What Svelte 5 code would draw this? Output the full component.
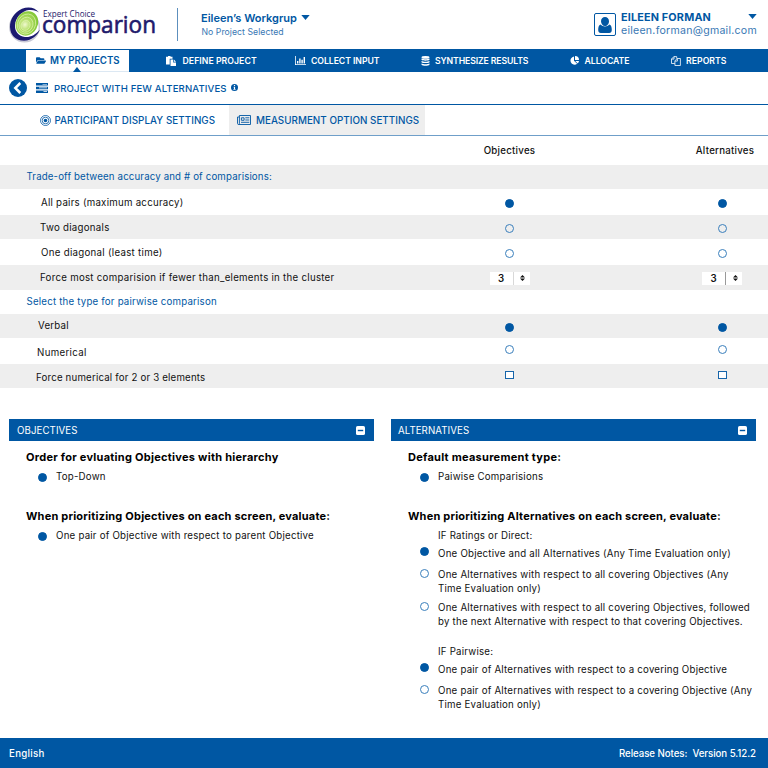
<script>
  const nav = [
    { icon: 'paste', label: 'DEFINE PROJECT', width: 129, gap: 16.5, track: 0.05 },
    { icon: 'chart', label: 'COLLECT INPUT', width: 126, gap: 16, track: -0.06 },
    { icon: 'stack', label: 'SYNTHESIZE RESULTS', width: 149, gap: 14, track: -0.12 },
    { icon: 'pie', label: 'ALLOCATE', width: 101, gap: 14.5, track: -0.04 },
    { icon: 'copy', label: 'REPORTS', width: 70, gap: 15, track: 0.04 }
  ];

  const rows = [
    { label: 'Trade-off between accuracy and # of comparisions:', x: 26.5, h: 24, grey: true, head: true, dy: -0.5, track: 0.14 },
    { label: 'All pairs (maximum accuracy)', x: 41, h: 26, dy: 0, track: 0.25, mark: 'on', my: 1 },
    { label: 'Two diagonals', x: 40, h: 24, grey: true, dy: 0, track: 0.27, mark: 'off', my: 1 },
    { label: 'One diagonal (least time)', x: 41, h: 26, dy: 0, track: 0.29, mark: 'off', my: 1 },
    { label: 'Force most comparision if fewer than_elements in the cluster', x: 40, h: 25, grey: true, dy: -0.5, track: 0.27, mark: 'spin', my: 0.5 },
    { label: 'Select the type for pairwise comparison', x: 26.5, h: 24, head: true, dy: -1, track: 0.2 },
    { label: 'Verbal', x: 38, h: 24, grey: true, dy: -0.5, track: 0.22, mark: 'on', my: 1 },
    { label: 'Numerical', x: 37, h: 26, dy: 1, track: 0.33, mark: 'off', my: -1.5 },
    { label: 'Force numerical for 2 or 3 elements', x: 36, h: 24, grey: true, dy: 1, track: 0.18, mark: 'box', my: -1 }
  ];
</script>

{#snippet mark(kind)}
  {#if kind === 'on'}
    <span class="dot on"></span>
  {:else if kind === 'off'}
    <span class="dot"></span>
  {:else if kind === 'box'}
    <span class="box"></span>
  {:else if kind === 'spin'}
    <span class="spin">
      <span class="num">3</span>
      <span class="arrows">
        <svg width="5" height="6" viewBox="0 0 5 6"><path d="M2.5 0 5 2.6H0zM0 3.4h5L2.5 6z" /></svg>
      </span>
    </span>
  {/if}
{/snippet}

{#snippet option(on, lines, gap, dotTop = 3)}
  <div class="option" style:margin-top="{gap}px">
    <span class="dot {on ? 'on' : ''}" style:margin-top="{dotTop}px"></span>
    <div class="lines">
      {#each lines as line}<div>{line}</div>{/each}
    </div>
  </div>
{/snippet}

{#snippet panelHead(title)}
  <div class="panel-head">
    <span>{title}</span>
    <svg width="9" height="9" viewBox="0 0 9 9"><rect width="9" height="9" rx="1.6" fill="#fff" /><rect x="1.8" y="3.8" width="5.4" height="1.4" fill="#0057a3" /></svg>
  </div>
{/snippet}

<div class="page">
  <header>
    <svg class="logo" width="150" height="40" viewBox="0 0 150 40">
      <defs>
        <radialGradient id="green" cx="0.45" cy="0.58" r="0.6">
          <stop offset="0" stop-color="#f1f9d0" />
          <stop offset="0.4" stop-color="#b5df6a" />
          <stop offset="1" stop-color="#7cc52f" />
        </radialGradient>
      </defs>
      <ellipse cx="15.500" cy="22" rx="14.800" ry="14.800" fill="none" stroke="#c9cad6" stroke-width="1.400" transform="translate(0 1)" />
      <path fill="#1c1a70" fill-rule="evenodd" d="M30 8.500C26.500 3.500 19.500 2 13 4.800 5.500 8 .8 15.500 1 23 1.200 31.500 7.500 37.200 15.500 36.800 23 36.300 28.500 31.500 31 25.500 26.500 31 21 33.600 16 33 9.500 32.200 5.500 27.300 6 21 6.600 13.500 12.500 7 20 6 24.500 5.600 27.500 6.600 30 8.500Z" />
      <ellipse cx="17.900" cy="19.400" rx="10.900" ry="12.600" fill="url(#green)" transform="rotate(30 17.9 19.4)" />
      <g fill="none" stroke="#def2ae" stroke-width="0.7">
        <ellipse cx="17.500" cy="20" rx="8.900" ry="10.300" transform="rotate(30 17.5 20)" />
        <ellipse cx="17" cy="20.700" rx="6.700" ry="7.700" transform="rotate(30 17 20.7)" />
        <ellipse cx="16.500" cy="21.400" rx="4.300" ry="5.100" transform="rotate(30 16.5 21.4)" />
      </g>
      <text x="34" y="13" class="logo-small" textLength="52" lengthAdjust="spacingAndGlyphs">Expert Choice</text>
      <text x="33" y="28.600" class="logo-big" textLength="114" lengthAdjust="spacingAndGlyphs">comparion</text>
    </svg>
    <div class="rule"></div>
    <div class="workgroup">
      <div class="wg-name">Eileen’s Workgrup <svg width="9" height="5" viewBox="0 0 9 5"><path d="M.3 0h8.400L4.500 5z" /></svg></div>
      <div class="wg-sub">No Project Selected</div>
    </div>
    <div class="avatar">
      <svg width="14" height="16" viewBox="0 0 14 16"><path d="M7 0C9.400 0 11 1.700 11 4.200 11 6.800 9.300 9 7 9S3 6.800 3 4.200C3 1.700 4.600 0 7 0ZM2.900 7.500C3.900 9.100 5.300 9.400 7 9.400S10.100 9.100 11.100 7.500C13.200 7.800 13.800 10 13.800 13 13.800 15 12.800 15.900 11.200 15.900H2.800C1.200 15.900.2 15 .2 13 .2 10 .8 7.800 2.900 7.500Z" /></svg>
    </div>
    <div class="user">
      <div class="user-top"><span>EILEEN FORMAN</span><svg width="9" height="5" viewBox="0 0 9 5"><path d="M.3 0h8.400L4.500 5z" /></svg></div>
      <div class="email">eileen.forman@gmail.com</div>
    </div>
  </header>

  <nav>
    <div class="active">
      <svg width="10" height="9" viewBox="0 32 576 448"><path d="M572.694 292.093L500.27 416.248A63.997 63.997 0 0 1 444.989 448H45.025c-18.523 0-30.064-20.093-20.731-36.093l72.424-124.155A64 64 0 0 1 152 256h399.964c18.523 0 30.064 20.093 20.73 36.093zM152 224h328v-48c0-26.510-21.490-48-48-48H272l-64-64H48C21.490 64 0 85.490 0 112v278.046l69.077-118.418C86.214 242.250 117.989 224 152 224z" /></svg>
      <span>MY PROJECTS</span>
      <i class="pointer"></i>
    </div>
    {#each nav as item}
      <div class="nav-item" style:width="{item.width}px">
        <span class="nav-icon" style:width="{item.gap}px">
          {#if item.icon === 'paste'}
            <svg width="10" height="10" viewBox="0 0 10 10"><path fill="#fff" d="M0 .8h2V0h2.500v.8h2v1.900H3.700V8.600H0z" /><path fill="#fff" d="M4.500 3.500h2.700v2.900H10V10H4.500zM7.900 3.500 10 5.700H7.900z" /></svg>
          {:else if item.icon === 'chart'}
            <svg width="11" height="9" viewBox="0 0 11 9"><path fill="#fff" d="M0 0h.8v8.200H11V9H0zM2 5h1.400v2.600H2zM4.200 2.600h1.400v5H4.200zM6.400 3.800h1.400v3.800H6.400zM8.600 1H10v6.600H8.600z" /></svg>
          {:else if item.icon === 'stack'}
            <svg width="9" height="10" viewBox="0 0 9 10"><g fill="#fff"><ellipse cx="4.500" cy="1.400" rx="4" ry="1.300" /><path d="M.5 2.600c2 1 6 1 8 0v1.200c-1.500 1.200-6.500 1.200-8 0zM.5 5c2 1 6 1 8 0v1.200c-1.500 1.200-6.500 1.200-8 0zM.5 7.400c2 1 6 1 8 0v1.300c-1.500 1.500-6.500 1.500-8 0z" /></g></svg>
          {:else if item.icon === 'pie'}
            <svg width="9" height="9" viewBox="0 0 9 9"><path fill="#fff" d="M4 .5v4.300l3.100 3A4.100 4.100 0 1 1 4 .5ZM5 0A4.100 4.100 0 0 1 9 4.100H5ZM5.300 4.900H9A4.100 4.100 0 0 1 7.800 7.400z" /></svg>
          {:else}
            <svg width="10" height="10" viewBox="0 0 10 10"><g fill="none" stroke="#fff" stroke-width=".8"><path d="M3.800 7.500H.5V3L2.900.6h2.800v2M3 .6v2.500H.5M3.900 4.900 6.200 2.500h3.200v7H3.900zM6.400 2.600v2.500H4" /></g></svg>
          {/if}
        </span>
        <span style:letter-spacing="{item.track}px">{item.label}</span>
      </div>
    {/each}
  </nav>

  <div class="crumb">
    <svg width="18" height="18" viewBox="0 0 18 18"><circle cx="9" cy="9" r="9" fill="#0057a3" /><path d="M11.300 4 6.300 9l5 5" fill="none" stroke="#fff" stroke-width="2.500" /></svg>
    <svg class="server" width="12" height="10" viewBox="0 0 12 10"><path d="M0 0h12v2.500H0zM0 3.700h12v2.500H0zM0 7.400h12v2.500H0z" /><path fill="#fff" d="M6.500.9H11v.7H6.500zM3 4.600h8v.7H3zM7.500 8.300H11V9H7.500z" /></svg>
    <span>PROJECT WITH FEW ALTERNATIVES</span>
    <svg class="info" width="7" height="7" viewBox="0 0 7 7"><circle cx="3.500" cy="3.500" r="3.500" /><path fill="#fff" d="M2.900 1h1.200v1H2.900zM2.600 2.700h1.500v2.200h.5v.8H2.400v-.8h.5V3.400h-.3z" /></svg>
  </div>

  <div class="tabs">
    <div class="tab first">
      <svg width="11" height="11" viewBox="0 0 11 11"><g fill="none" stroke="#0057a3" stroke-width=".8"><circle cx="5.500" cy="5.500" r="5" /><circle cx="5.500" cy="5.500" r="3.300" /></g><circle cx="5.500" cy="5.500" r="1.800" /></svg>
      <span>PARTICIPANT DISPLAY SETTINGS</span>
    </div>
    <div class="tab second">
      <svg width="14" height="10" viewBox="0 0 14 10"><path fill="none" stroke="#0057a3" stroke-width=".9" d="M2.400.5h11.100v9H1.600C.9 9.500.5 9.100.5 8.400V2h1.900M2.400.5v7.900c0 .6-.3 1-.8 1" /><path fill="none" stroke="#0057a3" stroke-width=".9" d="M4.400 2.800h2.700v2.500H4.400zM8.300 2.800h4M8.300 5h4M4 7.300h8.300" /></svg>
      <span>MEASURMENT OPTION SETTINGS</span>
    </div>
  </div>

  <div class="grid heads">
    <span></span><span class="cell">Objectives</span><span class="cell last alt">Alternatives</span>
  </div>
  {#each rows as row}
    <div class="grid row" class:grey={row.grey} class:head={row.head} style:height="{row.h}px">
      <span style:padding-left="{row.x}px" style:margin-top="{row.dy * 2}px" style:letter-spacing="{row.track}px">{row.label}</span>
      {#if row.mark}
        <span class="cell" style:margin-top="{row.my * 2}px">{@render mark(row.mark)}</span>
        <span class="cell last" style:margin-top="{row.my * 2}px">{@render mark(row.mark)}</span>
      {/if}
    </div>
  {/each}

  <main>
    <section>
      {@render panelHead('OBJECTIVES')}
      <h3>Order for evluating Objectives with hierarchy</h3>
      {@render option(true, ['Top-Down'], 5)}
      <h3 class="next">When prioritizing Objectives on each screen, evaluate:</h3>
      {@render option(true, ['One pair of Objective with respect to parent Objective'], 5)}
    </section>
    <section class="right">
      {@render panelHead('ALTERNATIVES')}
      <h3>Default measurement type:</h3>
      {@render option(true, ['Paiwise Comparisions'], 5)}
      <h3 class="next">When prioritizing Alternatives on each screen, evaluate:</h3>
      <div class="cond">IF Ratings or Direct:</div>
      {@render option(true, ['One Objective and all Alternatives (Any Time Evaluation only)'], 4, 0)}
      {@render option(false, ['One Alternatives with respect to all covering Objectives (Any', 'Time Evaluation only)'], 6.500, 1.500)}
      {@render option(false, ['One Alternatives with respect to all covering Objectives, followed', 'by the next Alternative with respect to that covering Objectives.'], 5, 1)}
      <div class="cond second-cond">IF Pairwise:</div>
      {@render option(true, ['One pair of Alternatives with respect to a covering Objective'], 4, 0)}
      {@render option(false, ['One pair of Alternatives with respect to a covering Objective (Any', 'Time Evaluation only)'], 7, 1)}
    </section>
  </main>

  <footer><span class="lang">English</span><span class="release">Release Notes:&nbsp; Version 5.12.2</span></footer>
</div>

<style>
  .page {
    width: 768px;
    height: 768px;
    display: flex;
    flex-direction: column;
    overflow: hidden;
    background: #fff;
    color: #111;
    font-family: Inter, 'Open Sans', sans-serif;
    font-size: 9.7px;
    white-space: nowrap;
  }
  svg { display: block; flex: none; fill: #0057a3; }
  header { height: 49px; flex: none; display: flex; color: #0057a3; }
  .logo { margin: 4px 0 0 9px; overflow: visible; }
  .logo text { fill: #1f1a6b; font-family: 'Open Sans', 'Noto Sans', sans-serif; }
  .logo-small { font-size: 9.500px; }
  .logo-big { font-size: 23.500px; stroke: #1f1a6b; stroke-width: .6; }
  .rule { width: 1px; height: 33px; margin: 8px 0 0 18px; background: #5c8fbd; }
  .workgroup { width: 393px; margin: 10px 0 0 23px; }
  .wg-name { display: flex; align-items: center; gap: 4px; height: 15px; font-size: 11px; font-weight: 600; }
  .wg-sub { margin-top: 1px; height: 12px; line-height: 12px; font-size: 8.700px; color: #3978b4; letter-spacing: .04px; padding-left: .5px; }
  .avatar { width: 20px; height: 21px; margin-top: 13px; border: 1px solid #0057a3; border-radius: 2px; display: flex; align-items: center; justify-content: center; flex: none; }
  .user { margin: 10px 0 0 5px; width: 136px; }
  .user-top { display: flex; align-items: center; justify-content: space-between; height: 14px; font-size: 10.800px; font-weight: 700; letter-spacing: .18px; }
  .user-top svg { margin-top: -1px; }
  .email { height: 14px; line-height: 14px; font-size: 10.600px; letter-spacing: .24px; color: #3978b4; }

  nav { height: 23px; flex: none; background: #0057a3; display: flex; color: #fff; }
  .active { position: relative; box-sizing: border-box; width: 103px; height: 22px; margin: 1px 37px 0 26px; padding-left: 10px; display: flex; align-items: center; gap: 4px; background: #fff; border-bottom: 1px solid #dce8f3; color: #0057a3; font-size: 9.700px; font-weight: 600; }
  .pointer { position: absolute; left: 47px; bottom: -1px; border: 4.500px solid transparent; border-top: 0; border-bottom: 5px solid #0057a3; }
  .nav-item { display: flex; align-items: center; font-size: 8.700px; font-weight: 600; flex: none; }

  .crumb { height: 32px; flex: none; display: flex; align-items: center; padding: 0 0 0 9px; border-bottom: 1px solid #0057a3; color: #0057a3; font-size: 9.600px; font-weight: 500; letter-spacing: .12px; }
  .server { margin: 0 6px 0 9px; }
  .info { margin: -1px 0 0 4.500px; }
  .tabs { height: 30px; flex: none; display: flex; border-bottom: 1px solid #6f9fc9; color: #0057a3; font-size: 9.800px; font-weight: 500; letter-spacing: .06px; }
  .tab { display: flex; align-items: center; }
  .first { width: 189px; padding-left: 40px; gap: 3.500px; }
  .second { width: 188px; padding-left: 8px; gap: 5px; background: #eee; letter-spacing: .04px; }

  .grid { display: grid; grid-template-columns: 403px 213px 152px; align-items: center; flex: none; }
  .cell { display: flex; justify-content: center; }
  .last { padding-left: 60px; }
  .heads { height: 29px; font-weight: 500; letter-spacing: .24px; }
  .heads .alt { padding-left: 66px; }
  .grey { background: #eee; }
  .head { color: #0057a3; }
  .dot { box-sizing: border-box; width: 9px; height: 9px; border: 1px solid #3a7fbc; border-radius: 50%; flex: none; }
  .dot.on { background: #0057a3; border-color: #0057a3; }
  .box { box-sizing: border-box; width: 9px; height: 8px; border: 1px solid #1765aa; background: #fff; }
  .spin { display: flex; width: 40px; height: 13px; background: #fff; }
  .num { width: 23px; line-height: 13px; text-align: center; font-weight: 600; border-right: 1px solid #d8d8d8; }
  .last .num { border-color: #999; }
  .arrows { flex: 1; display: flex; align-items: center; justify-content: center; padding-left: 2px; }
  .arrows svg { fill: #111; }

  main { display: flex; margin-top: 31px; flex: 1; padding-left: 9px; gap: 17.500px; }
  section { width: 364.500px; letter-spacing: .22px; }
  .panel-head { height: 22px; padding: 0 9px 0 8px; display: flex; align-items: center; justify-content: space-between; background: #0057a3; color: #fff; letter-spacing: .08px; }
  .right .panel-head { padding-left: 7px; }
  h3 { margin: 9px 0 0 17px; height: 15px; line-height: 15px; font-size: 11px; font-weight: 700; color: #000; letter-spacing: .26px; }
  h3.next { margin-top: 25px; letter-spacing: .2px; }
  .option { display: flex; line-height: 14px; padding-left: 29px; }
  .lines { margin-left: 9px; }
  .cond { margin: 5px 0 0 47px; line-height: 14px; }
  .second-cond { margin-top: 16px; }

  footer { height: 30px; flex: none; display: flex; align-items: center; justify-content: space-between; padding: 0 12px 0 9px; background: #0057a3; color: #fff; font-weight: 500; }
  .lang { letter-spacing: .3px; }
  .release { letter-spacing: -.06px; }
</style>
